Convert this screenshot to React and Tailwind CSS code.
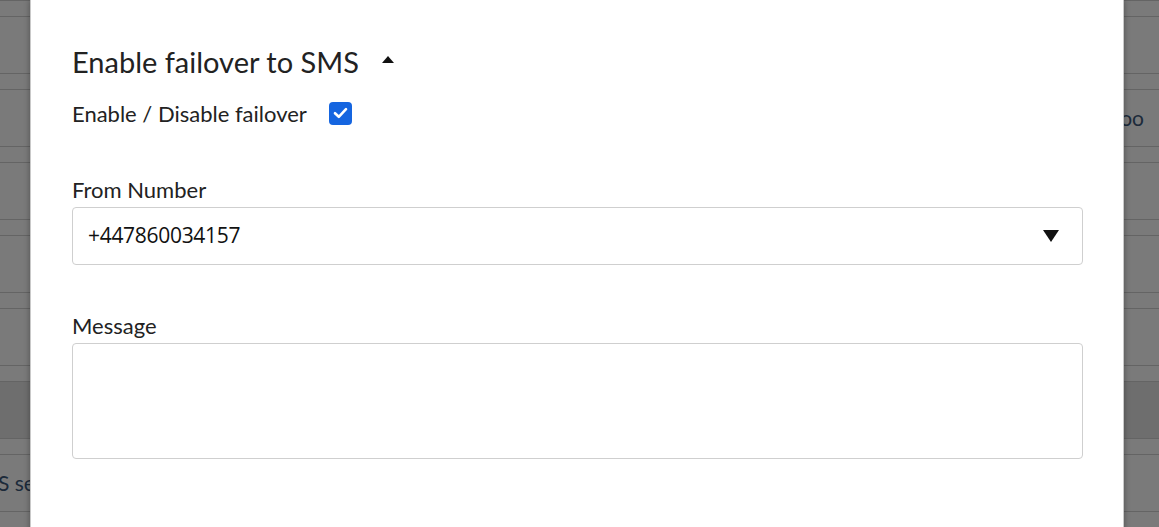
import React from 'react';

const rows = [0, 1, 2, 3, 4, 5, 6, 7];

const BackgroundTable = () => (
  <div className="absolute inset-0 bg-[#7a7a7a]">
    {rows.map((i) => (
      <div
        key={i}
        className={`h-[73px] border-t border-[#646464] ${i === 5 ? 'bg-[#6e6e6e]' : ''}`}
      >
        <div className="h-[16px] border-b border-[#646464] bg-[#7a7a7a]" />
        <div className="h-[56px] flex items-center justify-between text-[21px] text-[#1c2a3a] font-['Lato',sans-serif]">
          <span className="-ml-[2px]">{i === 6 ? 'S se' : ''}</span>
          <span className="mr-[15px]">{i === 1 ? 'oo' : ''}</span>
        </div>
      </div>
    ))}
  </div>
);

const App = () => {
  return (
    <div className="relative w-[1159px] h-[527px] overflow-hidden font-['Lato',sans-serif]">
      <BackgroundTable />
      <div className="absolute left-[30px] top-0 w-[1094px] h-[540px] bg-white border-x border-[#c9c9c9] shadow-[0_0_6px_rgba(0,0,0,0.35)]">
        <div className="pl-[41px] pr-[40px] pt-[44px]">
          <div className="flex items-center gap-[22px]">
            <h2 className="text-[29px] leading-[36px] text-[#222]">Enable failover to SMS</h2>
            <svg width="14" height="9" viewBox="0 0 14 9" className="mt-[-6px]">
              <path d="M7 1 L13 8 L1 8 Z" fill="#111" />
            </svg>
          </div>
          <div className="flex items-center mt-[20px] h-[26px]">
            <span className="text-[22px] text-[#222]">Enable / Disable failover</span>
            <div className="ml-[22px] w-[23px] h-[23px] rounded-[4px] bg-[#1565e0] flex items-center justify-center">
              <svg width="15" height="12" viewBox="0 0 15 12">
                <path d="M2 6.2 L5.8 9.8 L13 2.2" fill="none" stroke="#fff" strokeWidth="2.6" strokeLinecap="round" strokeLinejoin="round" />
              </svg>
            </div>
          </div>

          <div className="mt-[51px]">
            <label className="block text-[22px] leading-[26px] text-[#222]">From Number</label>
            <div className="mt-[4px] h-[58px] border border-[#cfcfcf] rounded-[4px] flex items-center justify-between pl-[15px] pr-[22px]">
              <span className="text-[21px] text-[#111] font-['Open_Sans',sans-serif] tracking-[-0.3px]">+447860034157</span>
              <svg width="18" height="14" viewBox="0 0 18 14">
                <path d="M1 1 L17 1 L9 13 Z" fill="#111" />
              </svg>
            </div>
          </div>

          <div className="mt-[48px]">
            <label className="block text-[22px] leading-[26px] text-[#222]">Message</label>
            <div className="mt-[4px] h-[116px] border border-[#cfcfcf] rounded-[4px]" />
          </div>
        </div>
      </div>
    </div>
  );
};

export default App;
